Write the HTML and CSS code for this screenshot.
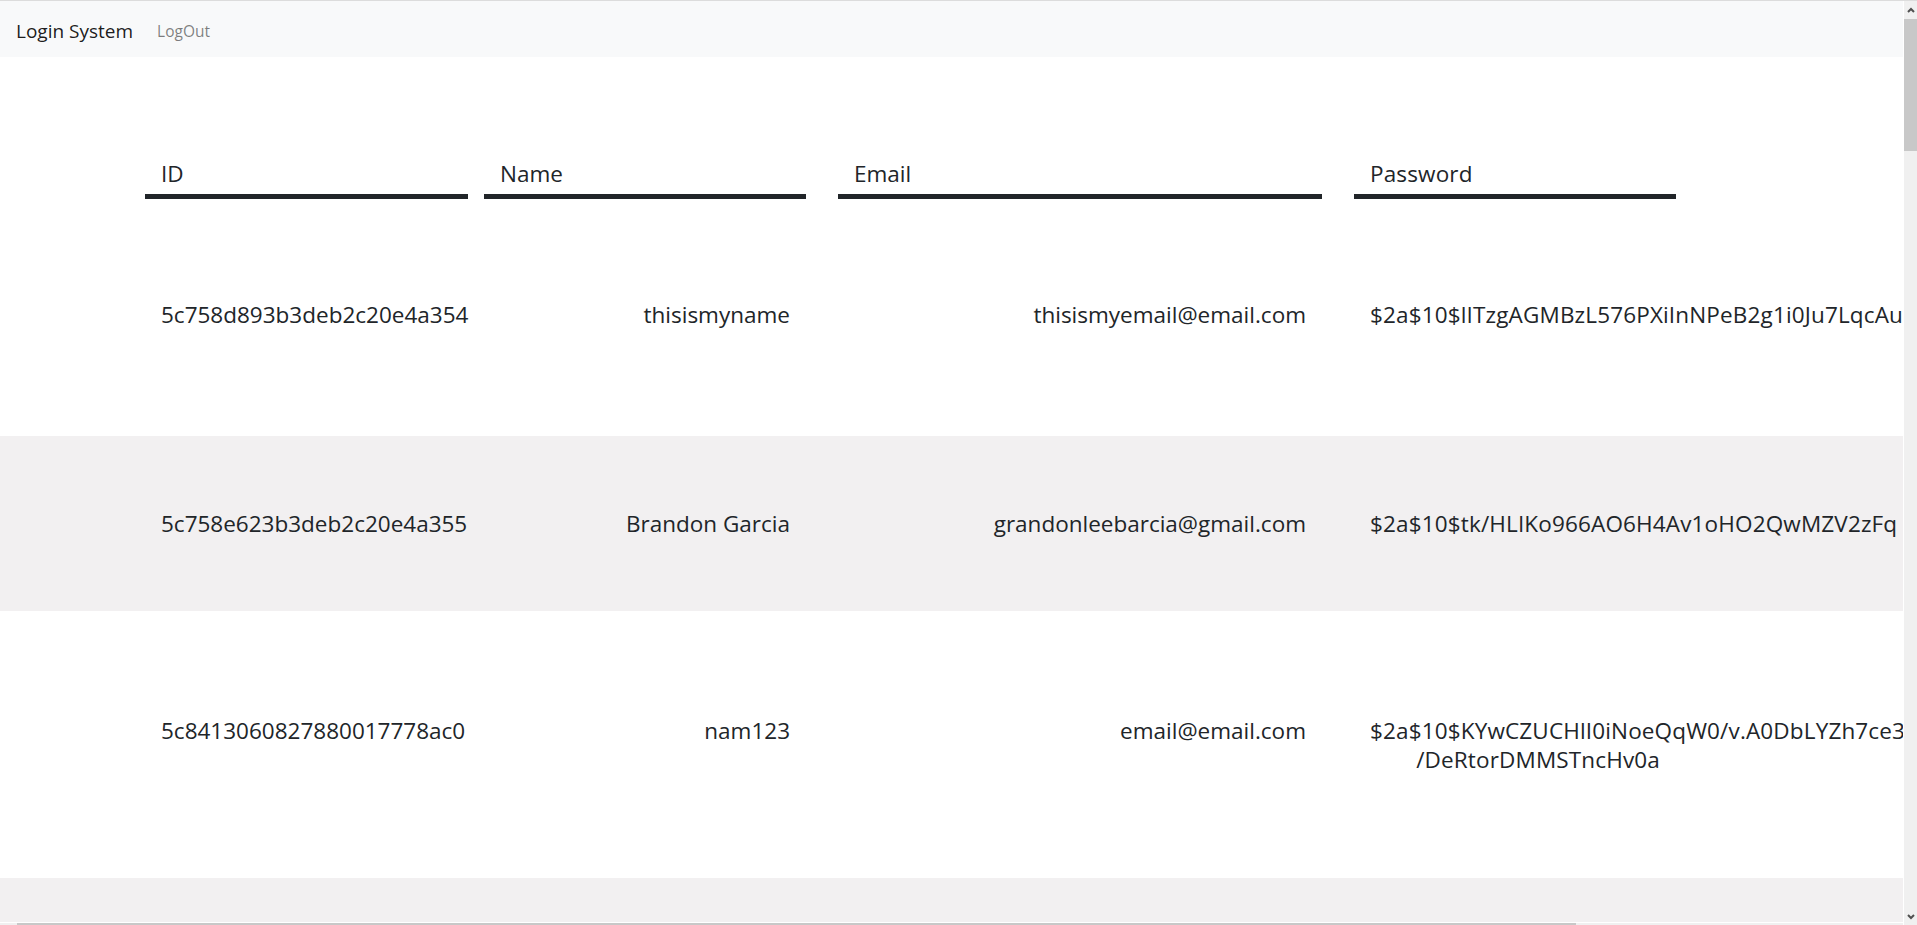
FILE: index.html
```html
<!DOCTYPE html>
<html lang="en">
<head>
<meta charset="utf-8">
<title>Login System</title>
<link rel="stylesheet" href="styles.css">
</head>
<body>
<div class="screen">
  <div class="left">
    <div class="viewport">
      <nav class="navbar">
        <span class="brand">Login System</span>
        <a class="nav-link">LogOut</a>
      </nav>
      <div class="table">
        <div class="tr thead">
          <div class="th w-id">ID</div>
          <div class="th w-name">Name</div>
          <div class="th w-email">Email</div>
          <div class="th w-pass">Password</div>
        </div>
        <div class="row r1">
          <div class="tr">
            <div class="td w-id">5c758d893b3deb2c20e4a354</div>
            <div class="td w-name">thisismyname</div>
            <div class="td w-email">thisismyemail@email.com</div>
            <div class="td w-pass">$2a$10$lITzgAGMBzL576PXiInNPeB2g1i0Ju7LqcAu</div>
          </div>
        </div>
        <div class="row r2 alt">
          <div class="tr">
            <div class="td w-id">5c758e623b3deb2c20e4a355</div>
            <div class="td w-name">Brandon Garcia</div>
            <div class="td w-email">grandonleebarcia@gmail.com</div>
            <div class="td w-pass">$2a$10$tk/HLIKo966AO6H4Av1oHO2QwMZV2zFq</div>
          </div>
        </div>
        <div class="row r3">
          <div class="tr">
            <div class="td w-id">5c8413060827880017778ac0</div>
            <div class="td w-name">nam123</div>
            <div class="td w-email">email@email.com</div>
            <div class="td w-pass">$2a$10$KYwCZUCHlI0iNoeQqW0/v.A0DbLYZh7ce3<br>/DeRtorDMMSTncHv0a</div>
          </div>
        </div>
        <div class="row r4 alt"></div>
      </div>
    </div>
    <div class="hscroll">
      <div class="hs-btn"></div>
      <div class="hs-thumb"></div>
    </div>
  </div>
  <div class="vscroll">
    <div class="sb-btn">
      <svg width="8" height="6" viewBox="0 0 8 6"><polyline points="1,5 4,2 7,5" fill="none" stroke="#505050" stroke-width="2"/></svg>
    </div>
    <div class="vs-thumb"></div>
    <div class="vs-space"></div>
    <div class="sb-btn">
      <svg width="8" height="6" viewBox="0 0 8 6"><polyline points="1,1 4,4 7,1" fill="none" stroke="#505050" stroke-width="2"/></svg>
    </div>
  </div>
</div>
</body>
</html>
```
FILE: styles.css
```css
html, body {
  margin: 0;
  padding: 0;
  overflow: hidden;
  background: #ffffff;
}

body {
  font-family: "Open Sans", "Noto Sans", sans-serif;
  color: #212529;
}

.screen {
  width: 1917px;
  height: 925px;
  box-sizing: border-box;
  border-top: 1px solid #dcdcdc;
  display: flex;
}

.left {
  flex: 1;
  min-width: 0;
  display: flex;
  flex-direction: column;
}

.viewport {
  flex: 1;
  min-height: 0;
  overflow: hidden;
}

.navbar {
  height: 56px;
  box-sizing: border-box;
  background: #f8f9fa;
  display: flex;
  align-items: center;
  padding: 3px 16px 0;
}

.brand {
  font-size: 19px;
  color: rgba(0, 0, 0, 0.9);
  margin-right: 16px;
}

.nav-link {
  font-size: 15.5px;
  color: rgba(0, 0, 0, 0.5);
  padding: 0 8px;
}

.table {
  margin-top: 102px;
  font-size: 22.5px;
  line-height: 29px;
}

.row {
  display: flex;
  flex-direction: column;
  justify-content: center;
  box-sizing: border-box;
}

.tr {
  display: flex;
  align-items: baseline;
  padding-left: 145px;
}

.thead {
  align-items: flex-end;
}

.th {
  box-sizing: border-box;
  padding: 0 16px 6px;
  border-bottom: 5px solid #212529;
  text-align: left;
  white-space: nowrap;
}

.td {
  box-sizing: border-box;
  padding: 0 16px;
  text-align: right;
  white-space: nowrap;
}

.w-id { width: 323px; margin-right: 16px; flex: none; }
.w-name { width: 322px; margin-right: 32px; flex: none; }
.w-email { width: 484px; margin-right: 32px; flex: none; }
.w-pass { width: 322px; flex: none; letter-spacing: 0.15px; }

.r1 { height: 237px; padding-bottom: 6px; }
.r2 { height: 175px; }
.r3 { height: 267px; }
.r4 { height: 175px; }

.alt { background: #f2f0f1; }

.hscroll {
  height: 3px;
  box-sizing: border-box;
  border-top: 1px solid #ffffff;
  background: #f0f0f0;
  display: flex;
}

.hs-btn { width: 17px; }
.hs-thumb { width: 1559px; background: #c8c8c8; }

.vscroll {
  width: 14px;
  box-sizing: border-box;
  border-left: 1px solid #ffffff;
  background: #f0f0f0;
  display: flex;
  flex-direction: column;
}

.sb-btn {
  height: 17px;
  display: flex;
  align-items: center;
  justify-content: center;
}

.vs-thumb {
  height: 132px;
  margin-top: 1px;
  background: #c8c8c8;
}

.vs-space { flex: 1; }
```
